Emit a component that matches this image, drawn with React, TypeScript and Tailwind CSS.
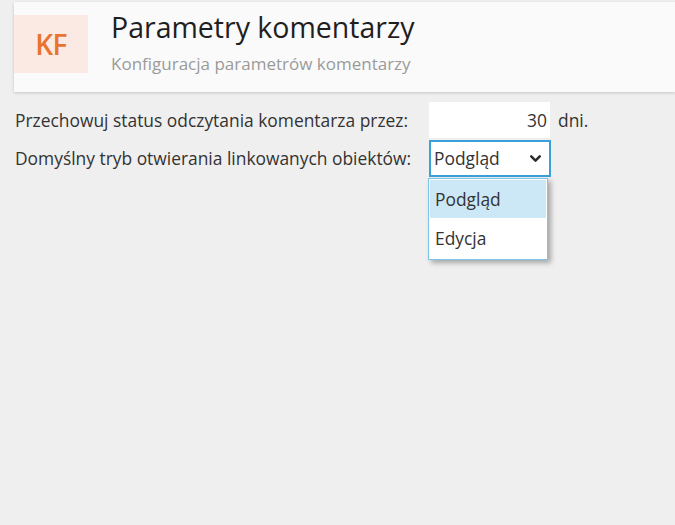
import { ChevronDown } from "lucide-react";

const FONT = { fontFamily: '"Open Sans", "Noto Sans", sans-serif' };

export default function App() {
  return (
    <div className="w-[675px] h-[525px] bg-[#efefef] text-[#333333] overflow-hidden pt-[2px]" style={FONT}>
      <div className="ml-[14px] h-[90px] bg-[#fafafa] shadow-[0_1px_3px_rgba(0,0,0,0.18)] flex items-start">
        <div className="mt-[13px] w-[74px] h-[58px] bg-[#fbeae3] flex items-center justify-center text-[#e8742f] text-[28px] font-semibold tracking-tight">
          KF
        </div>
        <div className="ml-[23px] mt-[4px]">
          <div className="text-[28.5px] leading-[42px] text-[#1f1f1f]">Parametry komentarzy</div>
          <div className="text-[17px] leading-[24px] mt-[4px] text-[#9a9a9a]">Konfiguracja parametrów komentarzy</div>
        </div>
      </div>

      <div className="pl-[15px] pt-[10px] text-[17.4px]">
        <div className="flex items-center h-[36px]">
          <div className="w-[414px] whitespace-nowrap">Przechowuj status odczytania komentarza przez:</div>
          <div className="w-[121px] h-[36px] bg-white flex items-center justify-end pr-[3px]">30</div>
          <div className="ml-[8px]">dni.</div>
        </div>
        <div className="flex items-start mt-[2px]">
          <div className="w-[414px] h-[37px] flex items-center whitespace-nowrap">Domyślny tryb otwierania linkowanych obiektów:</div>
          <div className="relative">
            <div className="w-[122px] h-[37px] border-2 border-[#3ba0d9] bg-white flex items-center justify-between pl-[3px] pr-[5px]">
              <span>Podgląd</span>
              <ChevronDown size={17} strokeWidth={3.5} className="text-[#2a2a2a]" />
            </div>
            <div className="absolute left-[-1px] top-[38px] w-[120px] bg-white border border-[#7cc4ea] shadow-[3px_3px_5px_rgba(0,0,0,0.3)] py-px">
              <div className="h-[38px] mx-px bg-[#cce8f6] flex items-center pl-[5px]">Podgląd</div>
              <div className="h-[40px] flex items-center pl-[6px]">Edycja</div>
            </div>
          </div>
        </div>
      </div>
    </div>
  );
}
